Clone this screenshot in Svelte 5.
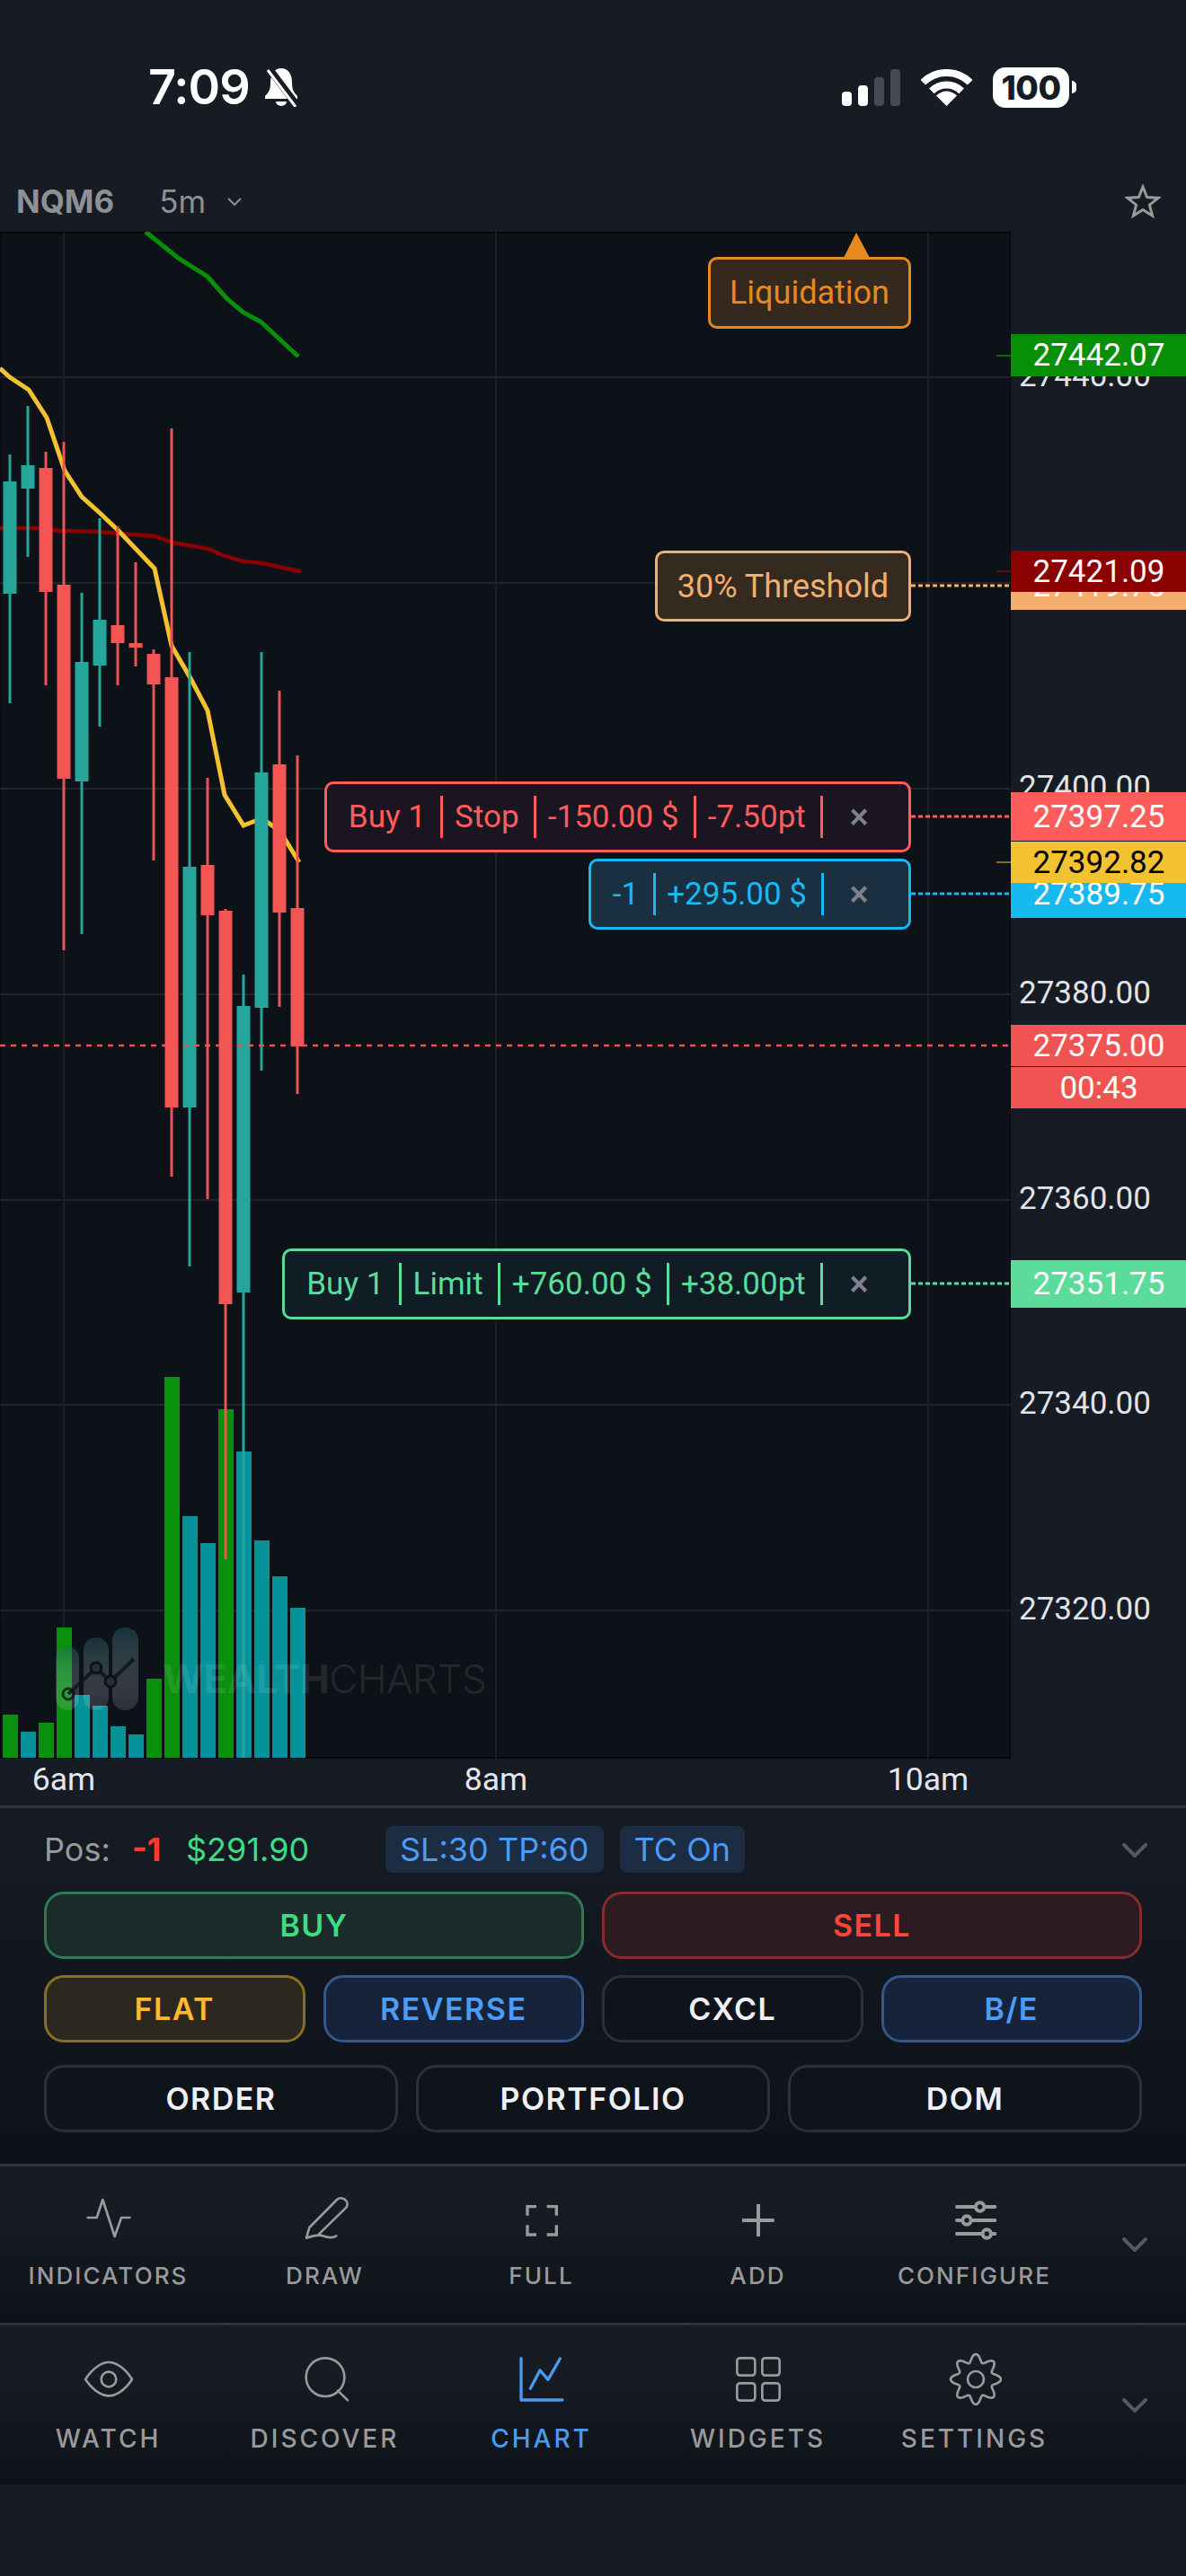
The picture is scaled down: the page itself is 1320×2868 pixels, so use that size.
<script>
  const candles = [
    [11, 506, 783, 536, 661, 'g'], [31, 452, 620, 518, 544, 'g'], [51, 503, 763, 521, 659, 'r'],
    [71, 492, 1058, 651, 867, 'r'], [91, 660, 1040, 737, 870, 'g'], [111, 577, 809, 690, 741, 'g'],
    [131, 586, 763, 696, 716, 'r'], [151, 626, 742, 716, 721, 'r'], [171, 723, 958, 728, 762, 'r'],
    [191, 477, 1310, 754, 1233, 'r'], [211, 726, 1410, 965, 1233, 'g'], [231, 866, 1335, 963, 1019, 'r'],
    [251, 1012, 1736, 1014, 1452, 'r'], [271, 1085, 1957, 1120, 1439, 'g'], [291, 726, 1192, 860, 1122, 'g'],
    [311, 769, 1121, 851, 1016, 'r'], [331, 841, 1218, 1011, 1165, 'r']
  ];
  const volumes = [
    [1288, 'g'], [1336, 't'], [1310, 'g'], [1042, 'g'], [1232, 't'], [1262, 't'], [1320, 't'], [1343, 't'],
    [1186, 'g'], [337, 'g'], [728, 't'], [804, 't'], [427, 'g'], [546, 't'], [797, 't'], [898, 't'], [987, 't']
  ].map(([v, c], i) => ({ x: 3 + i * 20, y: Math.round(1400 + v / 2.529), c }));

  const yellow = '0,410 11,420 32,434 52,465 72,524 91,553 111,571 132,591 152,612 172,633 191,719 212,755 231,791 250,885 271,919 292,911 312,926 333,960';
  const maroon = '0,588 43,588 67,591 110,592 132,594 172,597 192,604 232,611 250,619 271,625 292,627 333,636';
  const greenLine = '162,258 198,287 231,308 252,332 271,348 290,358 332,397';

  const gridY = [420, 649, 878, 1107, 1336, 1564, 1793];
  const gridX = [71, 552, 1033];
  const ticks = [
    ['27440.00', 418], ['27400.00', 876], ['27380.00', 1105], ['27360.00', 1334], ['27340.00', 1562], ['27320.00', 1791]
  ];
  const priceTags = [
    { t: '27442.07', top: 372, h: 47, c: 'p-green' },
    { t: '27419.75', top: 625, h: 54, c: 'p-orange' },
    { t: '27421.09', top: 613, h: 46, c: 'p-maroon' },
    { t: '27389.75', top: 968, h: 54, c: 'p-blue' },
    { t: '27397.25', top: 882, h: 54, c: 'p-red' },
    { t: '27392.82', top: 937, h: 46, c: 'p-yellow' },
    { t: '27375.00', top: 1141, h: 46, c: 'p-last' },
    { t: '00:43', top: 1188, h: 46, c: 'p-last' },
    { t: '27351.75', top: 1403, h: 53, c: 'p-mint' }
  ];
  const orders = [
    { top: 870, c: 'o-red', parts: ['Buy 1', 'Stop', '-150.00 $', '-7.50pt'] },
    { top: 956, c: 'o-blue', parts: ['-1', '+295.00 $'] },
    { top: 1390, c: 'o-mint', parts: ['Buy 1', 'Limit', '+760.00 $', '+38.00pt'] }
  ];

  const gear = (() => {
    const pts = [];
    for (let i = 0; i < 144; i++) {
      const a = (i / 144) * Math.PI * 2;
      const r = 71 + 13 * Math.cos(8 * a);
      pts.push(`${(258 + r * Math.sin(a)).toFixed(1)},${(657 - r * Math.cos(a)).toFixed(1)}`);
    }
    return pts.join(' ');
  })();
</script>

<div class="app">
  <div class="status">
    <div class="clock">
      <span class="time">7:09</span>
      <svg class="bell" viewBox="0 0 42 44" width="42" height="44">
        <path fill="#fff" d="M21 1C13 1 9 8 9 17C9 25 7 28 3 32V35H39V32C35 28 33 25 33 17C33 8 29 1 21 1Z" />
        <path fill="#fff" d="M15 38a6 5 0 0 0 12 0Z" />
        <path stroke="#161b24" stroke-width="8" d="M8 2L39 43" />
        <path stroke="#fff" stroke-width="3" d="M6 3L37 44" />
      </svg>
    </div>
    <div class="sys">
      <div class="signal">
        <i class="b1"></i><i class="b2"></i><i class="b3"></i><i class="b4"></i>
      </div>
      <svg viewBox="0 0 57 41" width="57" height="41">
        <path fill="none" stroke="#fff" stroke-width="8" d="M2.3 14.8A37 37 0 0 1 54.7 14.8" />
        <path fill="none" stroke="#fff" stroke-width="8" d="M11.9 24.4A23.5 23.5 0 0 1 45.1 24.4" />
        <path fill="#fff" d="M28.5 41L17 29.5A16 16 0 0 1 40 29.5Z" />
      </svg>
      <div class="battery"><span>100</span><i></i></div>
    </div>
  </div>

  <div class="symbol">
    <span class="ticker">NQM6</span>
    <span class="interval">5m</span>
    <svg class="small-chev" viewBox="0 0 16 9" width="16" height="9">
      <path d="M1 1L8 8L15 1" fill="none" stroke="#8e9094" stroke-width="2" />
    </svg>
    <svg class="star" viewBox="0 0 40 38" width="40" height="38">
      <path d="M20 3L24.6 14.6L37 15.4L27.4 23.2L30.6 35.2L20 28.6L9.4 35.2L12.6 23.2L3 15.4L15.4 14.6Z" fill="none" stroke="#9a9a9a" stroke-width="3" />
    </svg>
  </div>

  <div class="chart-row">
    <div class="plot">
      <svg class="canvas" viewBox="0 258 1125 1700" width="1125" height="1700">
        {#each gridY as y}<line x1="0" x2="1125" y1={y} y2={y} stroke="#20242b" stroke-width="2" />{/each}
        {#each gridX as x}<line x1={x} x2={x} y1="258" y2="1958" stroke="#20242b" stroke-width="1.5" />{/each}
        {#each volumes as v}
          <rect x={v.x} y={v.y} width="17" height={1957 - v.y} fill={v.c === 'g' ? '#09900d' : '#05929a'} />
        {/each}
        <polyline points={greenLine} fill="none" stroke="#078f07" stroke-width="5" />
        <polyline points={maroon} fill="none" stroke="#8b0000" stroke-width="4.5" stroke-linecap="round" />
        <polyline points={yellow} fill="none" stroke="#f2c230" stroke-width="5" />
        {#each candles as [x, wt, wb, bt, bb, c]}
          <rect x={x - 1.5} y={wt} width="3" height={wb - wt} fill={c === 'g' ? '#26a69a' : '#ef5350'} />
          <rect x={x - 7.5} y={bt} width="15" height={bb - bt} fill={c === 'g' ? '#26a69a' : '#f25553'} />
        {/each}
        <line x1="0" x2="1125" y1="1164" y2="1164" stroke="#ef5350" stroke-width="2.5" stroke-dasharray="6 6" />
        <line x1="1014" x2="1125" y1="652" y2="652" stroke="#f4ae6e" stroke-width="3" stroke-dasharray="5 3" />
        <line x1="1014" x2="1125" y1="909" y2="909" stroke="#ff5c5c" stroke-width="3" stroke-dasharray="5 3" />
        <line x1="1014" x2="1125" y1="995" y2="995" stroke="#16b9f0" stroke-width="3" stroke-dasharray="5 3" />
        <line x1="1014" x2="1125" y1="1429" y2="1429" stroke="#5bdc9a" stroke-width="3" stroke-dasharray="5 3" />
        <line x1="1109" x2="1125" y1="396" y2="396" stroke="#0a6a0a" stroke-width="2" />
        <line x1="1109" x2="1125" y1="636" y2="636" stroke="#6a0a0a" stroke-width="2" />
        <line x1="1109" x2="1125" y1="960" y2="960" stroke="#8a6f20" stroke-width="2" />
        <path d="M953 259L939 287H968Z" fill="#e8891f" />
      </svg>

      <div class="watermark">
        <svg viewBox="0 0 100 92" width="100" height="92">
          <defs>
            <linearGradient id="pill" x1="0" y1="0" x2="0" y2="1">
              <stop offset="0" stop-color="#24606a" stop-opacity=".42" />
              <stop offset="1" stop-color="#ffffff" stop-opacity=".13" />
            </linearGradient>
          </defs>
          <rect x="7" y="21" width="26" height="71" rx="13" fill="url(#pill)" />
          <rect x="38" y="11" width="28" height="81" rx="14" fill="url(#pill)" />
          <rect x="70" y="0" width="29" height="92" rx="14" fill="url(#pill)" />
          <polyline points="21,74 52,45 68,60 94,35" fill="none" stroke="#0d1118" stroke-width="4" opacity=".8" />
          <circle cx="21" cy="74" r="6" fill="none" stroke="#0d1118" stroke-width="3" opacity=".8" />
          <circle cx="52" cy="45" r="6" fill="#2a2d33" stroke="#0d1118" stroke-width="3" />
          <circle cx="68" cy="60" r="6" fill="#2a2d33" stroke="#0d1118" stroke-width="3" />
          <circle cx="4" cy="58" r="3.5" fill="#0d1118" />
        </svg>
        <span class="wm-text"><b>WEALTH</b>CHARTS</span>
      </div>

      <div class="tag liq">Liquidation</div>
      <div class="tag thr">30% Threshold</div>
      {#each orders as o}
        <div class="order {o.c}" style="top: {o.top - 258}px">
          {#each o.parts as p}<span class="seg">{p}</span><i class="sep"></i>{/each}
          <span class="close">×</span>
        </div>
      {/each}
    </div>

    <div class="axis">
      {#each ticks as [t, y]}
        <span class="tick" style="top: {y - 258}px">{t}</span>
      {/each}
      {#each priceTags as p}
        <span class="price {p.c}" style="top: {p.top - 258}px; height: {p.h}px">{p.t}</span>
      {/each}
    </div>
  </div>

  <div class="timeline">
    <span style="left: 71px">6am</span>
    <span style="left: 552px">8am</span>
    <span style="left: 1033px">10am</span>
  </div>

  <div class="panel">
    <div class="pos">
      <span class="pos-l">Pos:</span>
      <span class="pos-q">-1</span>
      <span class="pos-v">$291.90</span>
      <span class="chip">SL:30 TP:60</span>
      <span class="chip">TC On</span>
      <svg class="chev" viewBox="0 0 28 16" width="28" height="16"><path d="M2 2L14 14L26 2" /></svg>
    </div>
    <div class="row two">
      <button class="buy">BUY</button>
      <button class="sell">SELL</button>
    </div>
    <div class="row four">
      <button class="flat">FLAT</button>
      <button class="blue">REVERSE</button>
      <button class="plain">CXCL</button>
      <button class="blue">B/E</button>
    </div>
    <div class="row three">
      <button class="plain">ORDER</button>
      <button class="plain">PORTFOLIO</button>
      <button class="plain">DOM</button>
    </div>
  </div>

  <div class="bar first">
    <div class="item">
      <svg class="ico" viewBox="90 30 180 180"><path d="M110 117H140L160 57L200 180L222 117H250" /></svg>
      <span>INDICATORS</span>
    </div>
    <div class="item">
      <svg class="ico" viewBox="813 30 180 180"><path d="M840 185L850 150L942 57C956 43 986 60 974 82L882 172M840 185C860 178 880 172 895 178C910 184 928 186 940 178" /></svg>
      <span>DRAW</span>
    </div>
    <div class="item">
      <svg class="ico square" viewBox="99 30 180 180"><path d="M171 80H141V110M206 80H238V110M141 142V174H171M238 142V174H206" /></svg>
      <span>FULL</span>
    </div>
    <div class="item">
      <svg class="ico square wide" viewBox="819 30 180 180"><path d="M855 126H962M909 72V180" /></svg>
      <span>ADD</span>
    </div>
    <div class="item">
      <svg class="ico wide" viewBox="165 30 180 180">
        <path d="M195 81H322M195 126H322M195 171H322" />
        <circle cx="272" cy="81" r="14" /><circle cx="228" cy="126" r="14" /><circle cx="295" cy="171" r="14" />
      </svg>
      <span>CONFIGURE</span>
    </div>
    <svg class="chev end" viewBox="0 0 28 16" width="28" height="16"><path d="M2 2L14 14L26 2" /></svg>
  </div>

  <div class="bar second">
    <div class="item">
      <svg class="ico" viewBox="90 567 180 180">
        <path d="M102 657C130 615 160 600 180 600C200 600 232 615 258 657C232 698 200 712 180 712C160 712 130 698 102 657Z" />
        <circle cx="180" cy="657" r="25" />
      </svg>
      <span>WATCH</span>
    </div>
    <div class="item">
      <svg class="ico" viewBox="813 567 180 180">
        <circle cx="903" cy="650" r="64" /><path d="M945 695L978 727" />
      </svg>
      <span>DISCOVER</span>
    </div>
    <div class="item active">
      <svg class="ico" viewBox="99 567 180 180"><path d="M120 587V726H258M151 688L183 627L210 658L250 588" /></svg>
      <span>CHART</span>
    </div>
    <div class="item">
      <svg class="ico" viewBox="819 567 180 180">
        <rect x="838" y="586" width="60" height="58" rx="10" /><rect x="922" y="586" width="58" height="58" rx="10" />
        <rect x="838" y="670" width="60" height="58" rx="10" /><rect x="922" y="670" width="58" height="58" rx="10" />
      </svg>
      <span>WIDGETS</span>
    </div>
    <div class="item">
      <svg class="ico" viewBox="165 567 180 180">
        <polygon points={gear} /><circle cx="258" cy="657" r="27" />
      </svg>
      <span>SETTINGS</span>
    </div>
    <svg class="chev end" viewBox="0 0 28 16" width="28" height="16"><path d="M2 2L14 14L26 2" /></svg>
  </div>
</div>

<style>
  :global(body) { margin: 0; background: #161b24; }
  .app {
    width: 1320px; height: 2868px; display: flex; flex-direction: column;
    background: #161b24; overflow: hidden; font-family: Inter, "Liberation Sans", sans-serif;
  }

  .status { height: 186px; padding-top: 4px; display: flex; align-items: center; justify-content: space-between; padding-left: 165px; padding-right: 122px; }
  .clock { display: flex; align-items: center; gap: 14px; }
  .time { color: #fff; font-size: 54px; font-weight: 600; line-height: 1; letter-spacing: -1px; }
  .sys { display: flex; align-items: center; gap: 23px; }
  .signal { display: flex; align-items: flex-end; gap: 7px; height: 41px; }
  .signal i { width: 11px; border-radius: 4px; background: #fff; }
  .signal .b1 { height: 16px; }
  .signal .b2 { height: 23px; }
  .signal .b3 { height: 32px; background: #474a53; }
  .signal .b4 { height: 41px; background: #474a53; }
  .battery { display: flex; align-items: center; gap: 3px; }
  .battery span {
    width: 85px; height: 45px; border-radius: 14px; background: #fff; color: #161b24;
    font-size: 37px; font-weight: 800; line-height: 45px; text-align: center; letter-spacing: -.5px;
  }
  .battery i { width: 5px; height: 14px; background: #fff; border-radius: 0 5px 5px 0; }

  .symbol { height: 68px; display: flex; align-items: center; padding: 0 28px 0 18px; color: #8e9094; font-family: Inter, sans-serif; font-size: 35px; }
  .ticker { font-weight: 700; }
  .interval { margin-left: 50px; }
  .small-chev { margin-left: 24px; }
  .star { margin-left: auto; }

  .chart-row { height: 1700px; display: flex; }
  .plot { width: 1125px; height: 1700px; position: relative; background: #0d1118; box-shadow: inset 0 2px 0 #05070b, inset 1px 0 0 #05070b, inset -1px 0 0 #05070b, inset 0 -2px 0 #05070b; font-family: Roboto, sans-serif; }
  .canvas { display: block; }
  .axis { width: 195px; position: relative; overflow: hidden; font-family: Roboto, sans-serif; font-size: 35px; }
  .tick { position: absolute; left: 9px; transform: translateY(-50%); color: #dfe3ea; line-height: 1; }
  .price { position: absolute; left: 0; width: 196px; display: flex; align-items: center; justify-content: center; color: #fff; line-height: 1; }
  .p-green { background: #078f07; }
  .p-orange { background: #f4ae6e; }
  .p-maroon { background: #8b0000; }
  .p-blue { background: #16b9f0; }
  .p-red { background: #ff5c5c; }
  .p-yellow { background: #f2c230; color: #000; }
  .p-last { background: #f05452; }
  .p-mint { background: #5bdc9a; }

  .watermark { position: absolute; left: 55px; top: 1554px; display: flex; align-items: flex-end; gap: 26px; }
  .watermark svg { display: block; }
  .wm-text { font-family: Inter, sans-serif; font-size: 44px; line-height: 1; color: rgba(255, 255, 255, .11); font-weight: 300; margin-bottom: 13px; letter-spacing: -.5px; }
  .wm-text b { font-weight: 700; }

  .tag { position: absolute; right: 111px; box-sizing: border-box; height: 80px; display: flex; align-items: center; border-radius: 10px; border: 3px solid; font-size: 36px; white-space: nowrap; }
  .liq { top: 28px; padding: 0 21px; color: #e8891f; border-color: #e8891f; background: #35281f; }
  .thr { top: 355px; padding: 0 22px; height: 79px; color: #f4ae6e; border-color: #f4ae6e; background: #352a1f; }

  .order { position: absolute; right: 111px; box-sizing: border-box; height: 79px; display: flex; align-items: center; padding-left: 24px; border-radius: 10px; border: 3px solid; font-size: 35px; white-space: nowrap; }
  .sep { width: 3px; height: 47px; background: currentColor; margin: 0 13px 0 16.25px; }
  .o-blue .sep { margin: 0 12.5px 0 15.5px; }
  .close { width: 96px; margin-left: -14px; box-sizing: border-box; padding-right: 14px; text-align: center; color: #7f818c; font-weight: 700; font-size: 36px; font-family: "Liberation Sans", sans-serif; }
  .o-red { color: #ff5c5c; border-color: #ff5c5c; background: #1a1520; }
  .o-blue { color: #16b9f0; border-color: #16b9f0; background: #1a2f40; }
  .o-mint { color: #5bdc9a; border-color: #5bdc9a; background: #111d24; }

  .timeline { height: 52px; position: relative; font-family: Roboto, sans-serif; font-size: 35.5px; color: #e3e6ec; }
  .timeline span { position: absolute; top: 24px; transform: translate(-50%, -50%); line-height: 1; }

  .panel { border-top: 3px solid #2e3340; height: 396px; padding: 0 49px; background: linear-gradient(#161b24, #0d1118); display: flex; flex-direction: column; }
  .pos { height: 52px; margin-top: 20px; display: flex; align-items: center; font-size: 36px; position: relative; }
  .pos-l { color: #9a9a9a; width: 98px; }
  .pos-q { color: #ff3b30; font-weight: 700; width: 60px; }
  .pos-v { color: #3ddc84; width: 222px; }
  .chip { height: 52px; display: flex; align-items: center; padding: 0 16px; background: #1c2c42; color: #4c9bf5; border-radius: 8px; margin-right: 18px; }
  .chev { fill: none; }
  .chev path { fill: none; stroke: #55585f; stroke-width: 4; stroke-linecap: round; stroke-linejoin: round; }
  .pos .chev { position: absolute; right: -6px; top: 19px; }

  .row { display: grid; gap: 20px; height: 75px; }
  .two { grid-template-columns: 1fr 1fr; margin-top: 21px; }
  .four { grid-template-columns: repeat(4, 1fr); margin-top: 18px; }
  .three { grid-template-columns: repeat(3, 1fr); margin-top: 25px; }
  button { border-radius: 22px; border: 3px solid; font: 600 34px Inter, sans-serif; letter-spacing: 1.5px; padding: 0; }
  .buy { background: #1a2b2a; border-color: #2f7a50; color: #3ddc84; }
  .sell { background: #2c1c22; border-color: #852c2e; color: #ff453a; }
  .flat { background: #2c2820; border-color: #8a6f20; color: #fdb92e; }
  .blue { background: #16233a; border-color: #34588a; color: #4c9bf5; }
  .plain { background: #0f131a; border-color: #2c303a; color: #eef0f5; }

  .bar { border-top: 3px solid #2e3340; display: flex; background: linear-gradient(#161b24 30%, #0e1218); position: relative; }
  .first { height: 146px; padding-top: 28px; }
  .second { height: 147px; padding-top: 30px; }
  .item { width: 241px; display: flex; flex-direction: column; align-items: center; color: #9a9a9a; }
  .item span { font-size: 26px; font-weight: 500; letter-spacing: 2.1px; line-height: 1; margin-top: 21px; }
  .second .item span { font-size: 28px; letter-spacing: 3px; margin-top: 22px; }
  .ico { width: 60px; height: 60px; display: block; fill: none; stroke: #9a9a9a; stroke-width: 8; stroke-linecap: round; stroke-linejoin: round; }
  .square { stroke-linecap: butt; stroke-linejoin: miter; stroke-width: 10; }
  .wide { stroke-width: 12; }
  .wide circle { fill: #141820; }
  .active { color: #4a9bf0; }
  .active .ico { stroke: #4a9bf0; stroke-width: 10; }
  .end { position: absolute; left: 1249px; top: 79px; }
  .second .end { top: 81px; }
</style>
